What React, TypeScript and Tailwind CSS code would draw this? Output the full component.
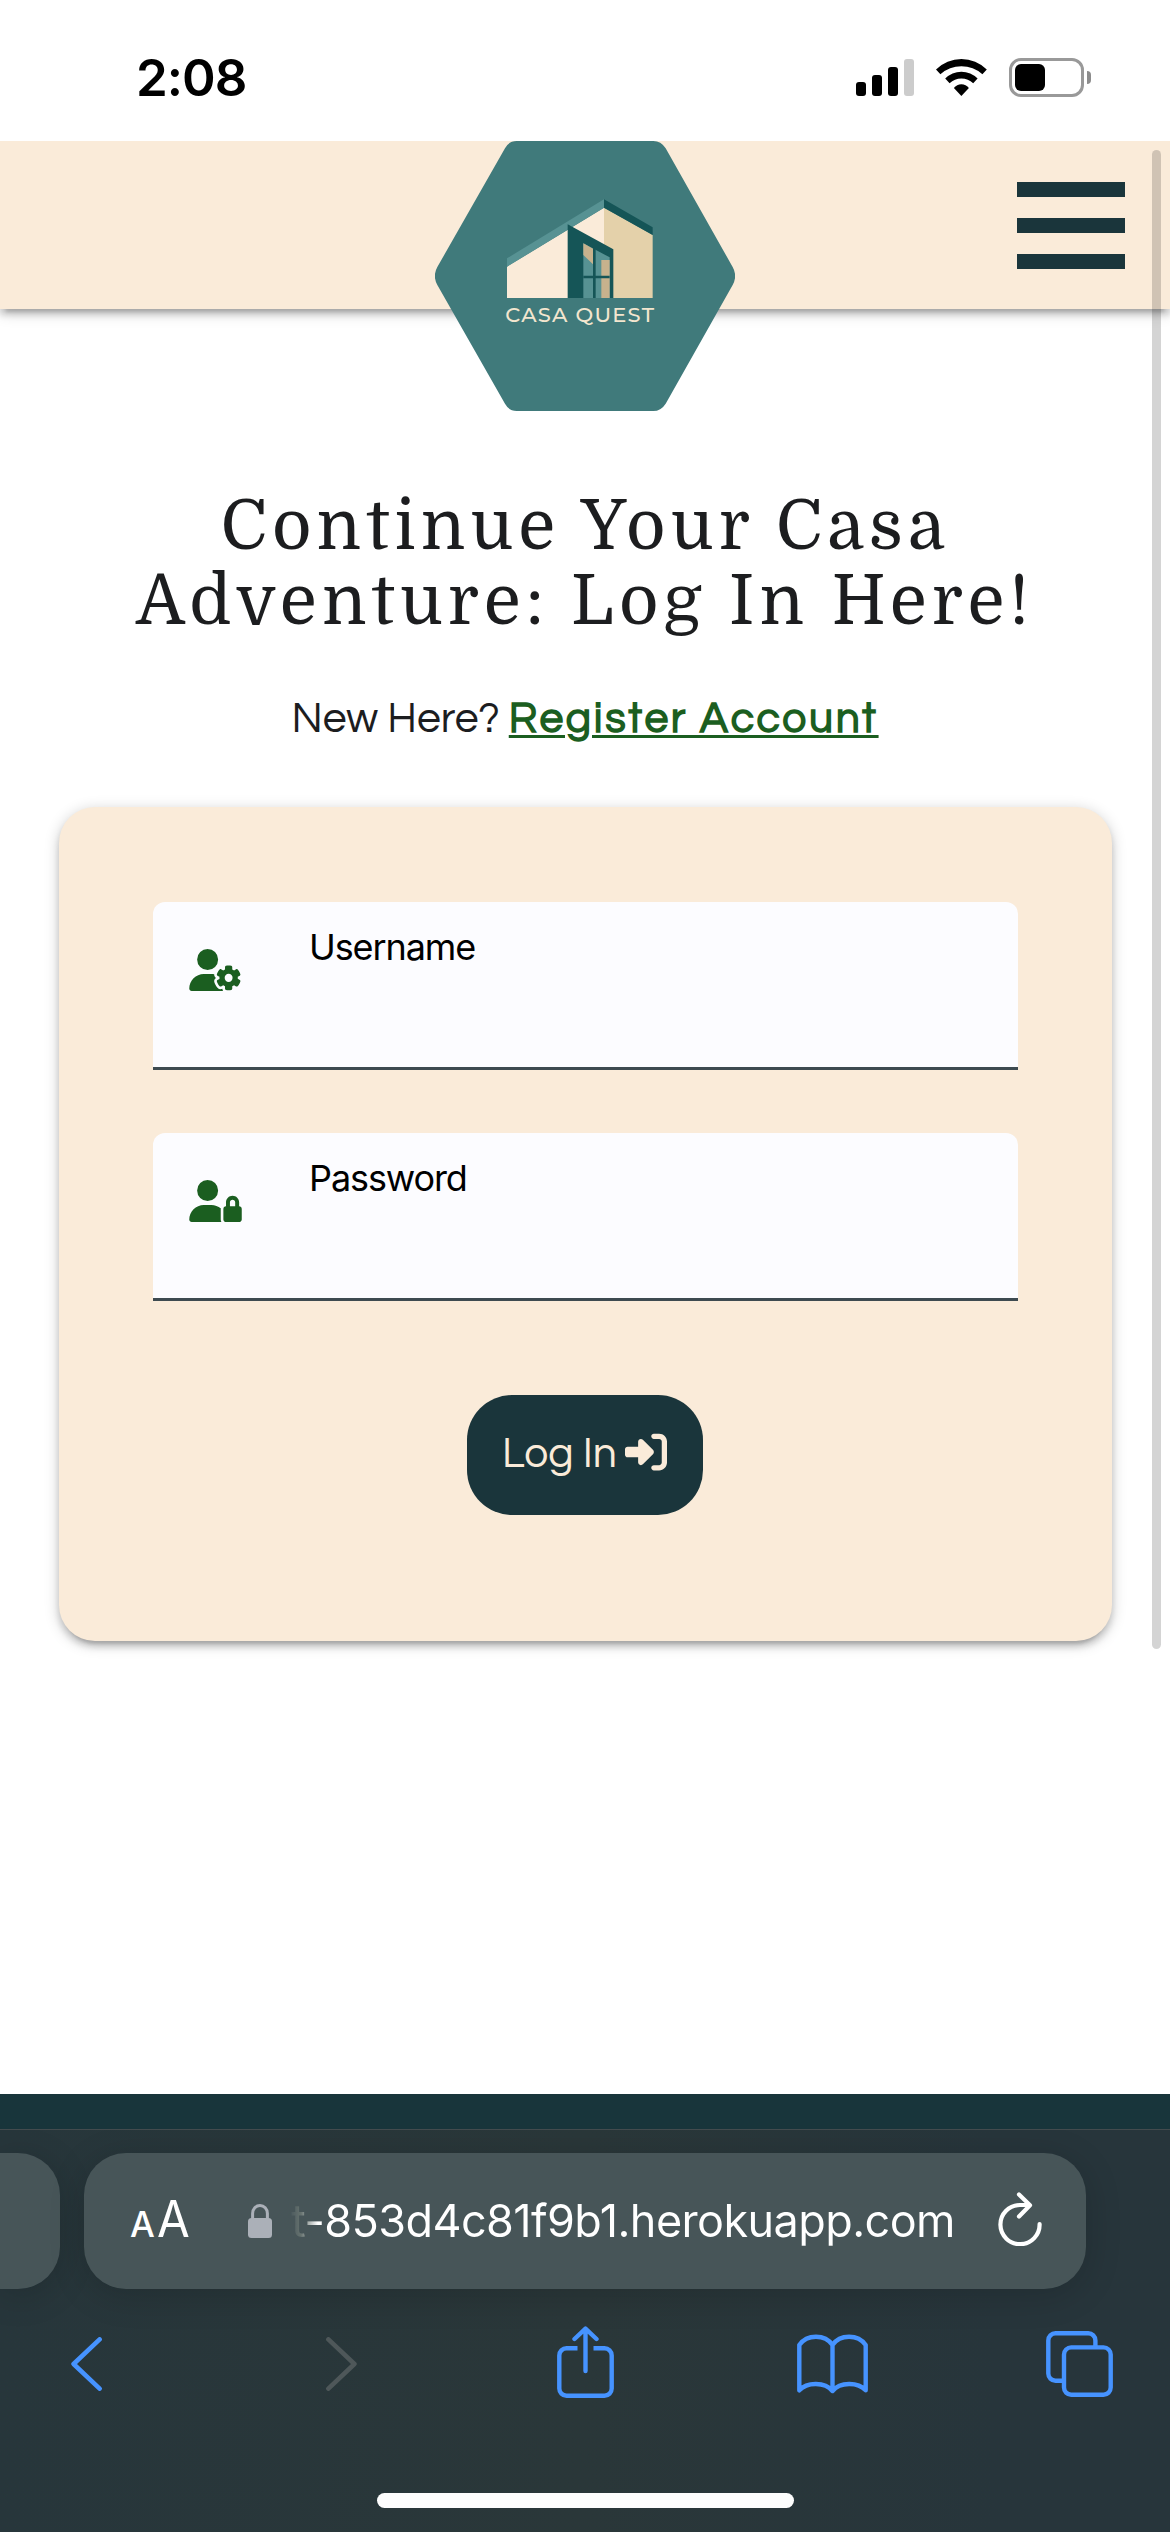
import type { ReactNode } from "react";
import { FaRightToBracket, FaUserGear, FaUserLock } from "react-icons/fa6";

function StatusBar() {
  return (
    <div className="flex h-[141px] items-center bg-white pt-[14px] pr-[79px] pl-[136px] font-['Inter',sans-serif]">
      <span className="text-[51px] leading-none font-semibold tracking-[-1px] text-black">2:08</span>
      <div className="ml-auto flex items-center">
        <div className="flex h-[37px] items-end gap-[6px]">
          <span className="h-[14px] w-[10px] rounded-[3px] bg-black" />
          <span className="h-[21px] w-[10px] rounded-[3px] bg-black" />
          <span className="h-[29px] w-[10px] rounded-[3px] bg-black" />
          <span className="h-[37px] w-[10px] rounded-[3px] bg-[#cccccc]" />
        </div>
        <svg className="ml-[22px] h-[37px] w-[51px]" viewBox="0 0 51 37">
          <path d="M0 10.5A36 36 0 0 1 50.8 10.5L46.4 15.2A31.5 31.5 0 0 0 4.4 15.2Z" />
          <path d="M9.2 19.5A22.6 22.6 0 0 1 41.6 19.5L37.2 24.3A17 17 0 0 0 13.6 24.3Z" />
          <path d="M17.9 29A9.5 9.5 0 0 1 32.9 29L25.4 37Z" />
        </svg>
        <div className="ml-[22px] flex h-[39px] w-[75px] items-center rounded-[12px] border-[3px] border-[#999999] pl-[3px]">
          <span className="h-[27px] w-[30px] rounded-[6px] bg-black" />
        </div>
        <span className="ml-[3px] h-[13px] w-[4px] rounded-r-full bg-[#8c8c8c]" />
      </div>
    </div>
  );
}

function Logo() {
  return (
    <svg className="absolute top-0 left-[435px] h-[270px] w-[300px]" viewBox="45 33 900 810">
      <path
        fill="#407a7b"
        d="M290 33Q267 33 255 55L52 411Q37 438 52 465L255 821Q267 843 290 843H700Q723 843 737 821L938 465Q953 438 938 411L737 55Q723 33 700 33Z"
      />
      <path fill="#faebd9" d="M261 410L552 233V504H261Z" />
      <path fill="#e4d1aa" d="M552 233L698 315V504H552Z" />
      <path fill="#579293" d="M261 385L552 208V233L261 410Z" />
      <path fill="#155557" d="M552 208L698 292V315L552 233ZM443 283L580 358V504H443Z" />
      <path fill="#579293" d="M490 340L569 382V504H490Z" />
      <path fill="#c7b28d" d="M490 340L519 356V403L490 375ZM544 390H569V504H544Z" />
      <path fill="#155557" d="M519 353H527V504H519ZM490 437H569V445H490Z" />
      <text
        x="256"
        y="576"
        fill="#f3e6cf"
        fontSize="63"
        fontWeight="500"
        textLength="446"
        fontFamily="Montserrat, Lato, sans-serif"
      >
        CASA QUEST
      </text>
    </svg>
  );
}

function Header() {
  return (
    <header className="relative z-10 flex h-[168px] items-center justify-end bg-[#faebd9] pr-[45px] shadow-[0_6px_6px_rgba(0,0,0,0.14),0_9px_3px_-6px_rgba(0,0,0,0.12),0_3px_15px_rgba(0,0,0,0.2)] [clip-path:inset(0_0_-120px_0)]">
      <Logo />
      <button className="flex flex-col gap-[21px]" aria-label="Menu">
        <span className="h-[15px] w-[108px] bg-[#1a353b]" />
        <span className="h-[15px] w-[108px] bg-[#1a353b]" />
        <span className="h-[15px] w-[108px] bg-[#1a353b]" />
      </button>
    </header>
  );
}

function Field({ icon, label, type }: { icon: ReactNode; label: string; type: string }) {
  return (
    <label className="flex h-[168px] items-start rounded-t-[12px] border-b-[3px] border-[#3d4a50] bg-[#fcfcff] pl-[36px]">
      <span className="mt-[47px] w-[120px] text-[#1b5e20]">{icon}</span>
      <span className="flex flex-1 flex-col pt-[20px] pr-[36px]">
        <span className="font-['Inter',sans-serif] text-[36px] leading-[50px] tracking-[-1.1px] text-black">
          {label}
        </span>
        <input type={type} className="h-[70px] w-full bg-transparent text-[40px] outline-none" />
      </span>
    </label>
  );
}

function LoginPage() {
  return (
    <main className="flex h-[1785px] flex-col bg-white px-[59px] pt-[180px]">
      <h1 className="text-center font-['Domine','Noto_Serif','DejaVu_Serif',serif] text-[68px] leading-[75px] tracking-[5.05px] text-[#1c1d1f]">
        Continue Your Casa
        <br />
        Adventure: Log In Here!
      </h1>
      <p className="mt-[50px] text-center font-['Questrial','Raleway','Lato',sans-serif] text-[42.6px] leading-[60px] whitespace-nowrap text-[#1c1d1f]">
        New Here?{" "}
        <a className="font-bold tracking-[2.65px] text-[#1b5e20] underline decoration-[3px] underline-offset-[3px]">
          Register Account
        </a>
      </p>
      <form className="mt-[58px] flex h-[834px] w-[1053px] flex-col rounded-[36px] bg-[#faebd9] px-[94px] pt-[95px] shadow-[0_6px_6px_rgba(0,0,0,0.14),0_9px_3px_-6px_rgba(0,0,0,0.12),0_3px_15px_rgba(0,0,0,0.2)]">
        <Field label="Username" type="text" icon={<FaUserGear className="h-[42px] w-[53px]" />} />
        <div className="h-[63px]" />
        <Field label="Password" type="password" icon={<FaUserLock className="h-[42px] w-[53px]" />} />
        <button
          type="button"
          className="mt-[94px] ml-[314px] flex h-[120px] w-[236px] items-center rounded-[45px] bg-[#1a353b] pl-[35px] text-[#faebd9]"
        >
          <span className="mb-[2px] w-[123px] text-left font-['Questrial','Raleway','Lato',sans-serif] text-[42.6px] leading-[60px] whitespace-nowrap">
            Log In
          </span>
          <FaRightToBracket className="mb-[7px] h-[42px] w-[42px]" />
        </button>
      </form>
    </main>
  );
}

function AddressRow() {
  return (
    <div className="flex h-[136px] items-stretch gap-[24px]">
      <div className="w-[60px] rounded-r-[42px] bg-[#475558] shadow-[0_6px_36px_rgba(0,0,0,0.16)]" />
      <div className="flex w-[1002px] items-center rounded-[42px] bg-[#475558] pl-[46px] font-['Inter',sans-serif] text-white shadow-[0_6px_36px_rgba(0,0,0,0.16)]">
        <span className="w-[118px] text-[50px] leading-[60px] whitespace-nowrap">
          <span className="mr-[2px] text-[35px] font-medium">A</span>
          <span className="inline-block origin-left scale-x-95">A</span>
        </span>
        <svg className="h-[34px] w-[24px]" viewBox="0 0 24 34" fill="none">
          <path d="M4.6 16V9.5a7.4 8 0 0 1 14.8 0V16" stroke="#abb0b8" strokeWidth="3" />
          <rect x="0" y="14" width="24" height="20" rx="3.5" fill="#abb0b8" />
        </svg>
        <span className="ml-[19px] w-[680px] bg-[linear-gradient(90deg,#4d5b5e_0px,#66726f_10px,#ffffff_27px)] bg-clip-text text-[45px] leading-[60px] tracking-[-0.6px] whitespace-nowrap text-transparent">
          t-853d4c81f9b1.herokuapp.com
        </span>
        <svg
          className="mb-[4px] ml-[27px] h-[54px] w-[44px]"
          viewBox="0 0 44 54"
          fill="none"
          stroke="#ffffff"
          strokeWidth="4.2"
          strokeLinecap="round"
          strokeLinejoin="round"
        >
          <path d="M41.6 32A19.6 19.6 0 1 1 22 13H31" />
          <path d="M21 2.5L32 13.2L21 24.5" />
        </svg>
      </div>
    </div>
  );
}

function Toolbar() {
  const line = { fill: "none", strokeLinecap: "round", strokeLinejoin: "round" } as const;
  return (
    <div className="mt-[37px] flex h-[72px] items-center pl-[71px]">
      <svg className="mt-[4px] h-[54px] w-[31px]" viewBox="0 0 31 54" {...line} stroke="#4693ff" strokeWidth="4.6">
        <path d="M28.6 2.4L2.6 27L28.6 51.6" />
      </svg>
      <svg className="mt-[4px] ml-[224px] h-[54px] w-[31px]" viewBox="0 0 31 54" {...line} stroke="#4e5759" strokeWidth="4.6">
        <path d="M2.4 2.4L28.4 27L2.4 51.6" />
      </svg>
      <svg className="ml-[200px] h-[72px] w-[57px]" viewBox="0 0 57 72" fill="none" stroke="#4693ff" strokeWidth="4.4">
        <path d="M20.5 22.3H9.5a7.2 7.2 0 0 0-7.2 7.2V62.5a7.2 7.2 0 0 0 7.2 7.2H47.5a7.2 7.2 0 0 0 7.2-7.2V29.5a7.2 7.2 0 0 0-7.2-7.2H36.5" />
        <path d="M28.5 3V45M17.5 13L28.5 2.6L39.5 13" strokeLinecap="round" strokeLinejoin="round" />
      </svg>
      <svg className="mt-[3px] ml-[183px] h-[60px] w-[71px]" viewBox="0 0 71 60" {...line} stroke="#4693ff" strokeWidth="4.4">
        <path d="M2.3 11C10 0 28 0 35.5 11C43 0 61 0 68.7 11V56.3C61 47.8 43 47.8 35.5 57C28 47.8 10 47.8 2.3 56.3ZM35.5 11V57" />
      </svg>
      <svg className="mt-[4px] ml-[178px] h-[66px] w-[67px]" viewBox="0 0 67 66" fill="none" stroke="#4693ff" strokeWidth="4.4">
        <path d="M49.4 16V9.5a7.2 7.2 0 0 0-7.2-7.2H9.5a7.2 7.2 0 0 0-7.2 7.2V42.5a7.2 7.2 0 0 0 7.2 7.2H18" />
        <rect x="18" y="16.4" width="46.7" height="47.3" rx="7.2" />
      </svg>
    </div>
  );
}

export default function App() {
  return (
    <div className="relative h-[2532px] w-[1170px] overflow-hidden bg-white">
      <StatusBar />
      <Header />
      <LoginPage />
      <div className="h-[35px] bg-[#18353b]" />
      <div className="flex h-[403px] flex-col overflow-hidden border-t border-[#434b4e] bg-[linear-gradient(90deg,#27363b_0%,#2a3739_50%,#27353b_85%)] pt-[23px]">
        <AddressRow />
        <Toolbar />
        <div className="mt-[95px] ml-[377px] h-[15px] w-[417px] rounded-full bg-[#fdfdfd]" />
      </div>
      <div className="absolute top-[150px] right-[9px] z-20 h-[1499px] w-[9px] rounded-full bg-black/17" />
    </div>
  );
}
